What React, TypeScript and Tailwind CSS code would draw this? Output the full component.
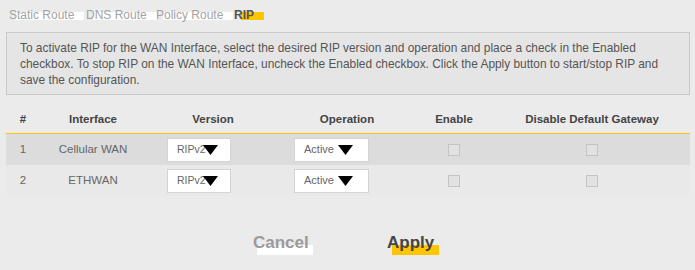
import React from 'react';

const tabs = [
  { label: 'Static Route', width: 'w-[77px]', active: false },
  { label: 'DNS Route', width: 'w-[70px]', active: false },
  { label: 'Policy Route', width: 'w-[78px]', active: false },
  { label: 'RIP', width: 'w-[40px]', active: true },
];

const rows = [
  { no: '1', name: 'Cellular WAN', shaded: true },
  { no: '2', name: 'ETHWAN', shaded: false },
];

const Caret: React.FC<{ className: string }> = ({ className }) => (
  <svg className={className} width="15" height="10" viewBox="0 0 15 10">
    <polygon points="0,0 15,0 7.5,10" fill="#000" />
  </svg>
);

const Checkbox: React.FC = () => (
  <div className="w-[12px] h-[12px] border border-[#c4c4c4] bg-[#e2e2e2]" />
);

export default function App() {
  return (
    <div className="w-[695px] h-[270px] bg-[#ebebeb] overflow-hidden font-['Liberation_Sans',Arial,sans-serif]">
      {/* tabs */}
      <div className="flex pt-[8px] pl-[9px] text-[12px] leading-[14px]">
        {tabs.map((t) => (
          <div key={t.label} className={t.width}>
            <span className="relative inline-block">
              <span
                className={`absolute left-[7px] -right-[10px] top-[4px] bottom-[2px] ${
                  t.active ? 'bg-[#ffc600]' : 'bg-white'
                }`}
              />
              <span className={`relative ${t.active ? 'text-[#555] font-bold' : 'text-[#a3a3a3]'}`}>{t.label}</span>
            </span>
          </div>
        ))}
      </div>

      {/* description */}
      <div className="mt-[10px] ml-[6px] w-[684px] border border-[#c9c9c9] bg-[#e5e5e5] pt-[7px] pb-[6px] pl-[13px] text-[11.9px] leading-[16px] text-[#555] whitespace-nowrap">
        To activate RIP for the WAN Interface, select the desired RIP version and operation and place a check in the Enabled
        <br />
        checkbox. To stop RIP on the WAN Interface, uncheck the Enabled checkbox. Click the Apply button to start/stop RIP and
        <br />
        save the configuration.
      </div>

      {/* table */}
      <div className="mt-[10px] ml-[6px] w-[684px] text-[11.5px]">
        <div className="grid grid-cols-[34px_106px_134px_134px_80px_196px] h-[29px] items-center pt-[2px] border-b border-[#ffc600] font-bold text-[#444]">
          <div className="text-center">#</div>
          <div className="text-center">Interface</div>
          <div className="text-center">Version</div>
          <div className="text-center">Operation</div>
          <div className="text-center">Enable</div>
          <div className="text-center">Disable Default Gateway</div>
        </div>
        {rows.map((r) => (
          <div
            key={r.no}
            className={`grid grid-cols-[34px_106px_134px_134px_80px_196px] h-[31px] items-center text-[#666] ${
              r.shaded ? 'bg-[#dcdcdc]' : 'bg-[#e9e9e9]'
            }`}
          >
            <div className="text-center">{r.no}</div>
            <div className="text-center">{r.name}</div>
            <div>
              <div className="relative ml-[21px] w-[64px] h-[24px] bg-white border border-[#d4d4d4] flex items-center pl-[9px] text-[10.5px] text-[#666]">
                RIPv2
                <Caret className="absolute left-[35px] top-[6px]" />
              </div>
            </div>
            <div>
              <div className="relative ml-[14px] w-[75px] h-[24px] bg-white border border-[#d4d4d4] flex items-center pl-[9px] text-[11px] text-[#666]">
                Active
                <Caret className="absolute left-[43px] top-[6px]" />
              </div>
            </div>
            <div className="flex justify-center">
              <Checkbox />
            </div>
            <div className="flex justify-center">
              <Checkbox />
            </div>
          </div>
        ))}
      </div>

      {/* buttons */}
      <div className="flex mt-[37px] pl-[253px] text-[17px] leading-[20px] font-bold">
        <div className="w-[134px]">
          <span className="relative inline-block">
            <span className="absolute left-[4px] -right-[4px] top-[12px] -bottom-[2px] bg-white" />
            <span className="relative text-[#9a9a9a]">Cancel</span>
          </span>
        </div>
        <div>
          <span className="relative inline-block">
            <span className="absolute left-[5px] -right-[5px] top-[12px] -bottom-[2px] bg-[#ffc600]" />
            <span className="relative text-[#454545]">Apply</span>
          </span>
        </div>
      </div>
    </div>
  );
}
